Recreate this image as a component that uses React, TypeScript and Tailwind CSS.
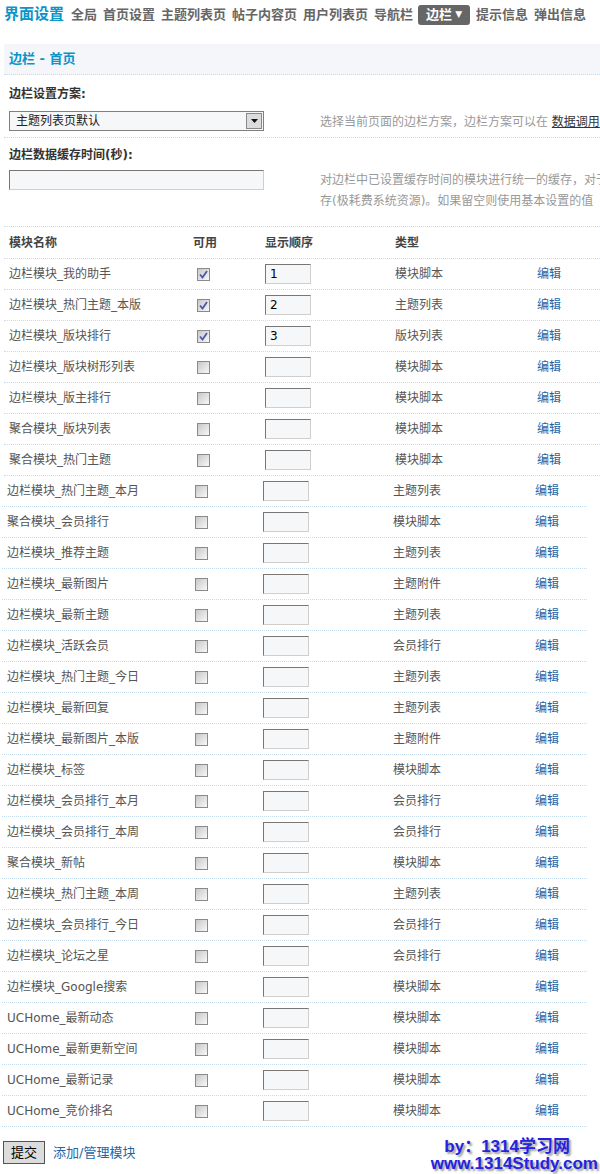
import React from 'react';

const font = "font-['DejaVu_Sans','Noto_Sans_CJK_SC',sans-serif]";

type Row = { name: string; on?: boolean; order?: string; type: string };

const mainRows: Row[] = [
  { name: '边栏模块_我的助手', on: true, order: '1', type: '模块脚本' },
  { name: '边栏模块_热门主题_本版', on: true, order: '2', type: '主题列表' },
  { name: '边栏模块_版块排行', on: true, order: '3', type: '版块列表' },
  { name: '边栏模块_版块树形列表', type: '模块脚本' },
  { name: '边栏模块_版主排行', type: '模块脚本' },
  { name: '聚合模块_版块列表', type: '模块脚本' },
  { name: '聚合模块_热门主题', type: '模块脚本' },
];

const moreRows: Row[] = [
  { name: '边栏模块_热门主题_本月', type: '主题列表' },
  { name: '聚合模块_会员排行', type: '模块脚本' },
  { name: '边栏模块_推荐主题', type: '主题列表' },
  { name: '边栏模块_最新图片', type: '主题附件' },
  { name: '边栏模块_最新主题', type: '主题列表' },
  { name: '边栏模块_活跃会员', type: '会员排行' },
  { name: '边栏模块_热门主题_今日', type: '主题列表' },
  { name: '边栏模块_最新回复', type: '主题列表' },
  { name: '边栏模块_最新图片_本版', type: '主题附件' },
  { name: '边栏模块_标签', type: '模块脚本' },
  { name: '边栏模块_会员排行_本月', type: '会员排行' },
  { name: '边栏模块_会员排行_本周', type: '会员排行' },
  { name: '聚合模块_新帖', type: '模块脚本' },
  { name: '边栏模块_热门主题_本周', type: '主题列表' },
  { name: '边栏模块_会员排行_今日', type: '会员排行' },
  { name: '边栏模块_论坛之星', type: '会员排行' },
  { name: '边栏模块_Google搜索', type: '模块脚本' },
  { name: 'UCHome_最新动态', type: '模块脚本' },
  { name: 'UCHome_最新更新空间', type: '模块脚本' },
  { name: 'UCHome_最新记录', type: '模块脚本' },
  { name: 'UCHome_竞价排名', type: '模块脚本' },
];

const navItems = ['全局', '首页设置', '主题列表页', '帖子内容页', '用户列表页', '导航栏'];

const Checkbox = ({ checked }: { checked?: boolean }) => (
  <span className="ml-[4px] flex h-[13px] w-[13px] items-center justify-center border border-[#8a8a8a] bg-gradient-to-br from-[#c8c8c8] to-[#f8f8f8]">
    {checked && (
      <svg width="9" height="9" viewBox="0 0 9 9">
        <path d="M1 4.5 L3.5 7.5 L8 1" fill="none" stroke="#4a5aa8" strokeWidth="1.8" />
      </svg>
    )}
  </span>
);

const OrderInput = ({ value }: { value?: string }) => (
  <div className="flex h-[20px] w-[46px] items-center border border-t-[#777] border-l-[#777] border-b-[#cfcfcf] border-r-[#cfcfcf] bg-[#f5f7f9] pl-[4px] text-[12px] text-black">
    {value}
  </div>
);

const TableRow = ({ row }: { row: Row }) => (
  <div className="grid h-[31px] grid-cols-[184px_72px_130px_142px_1fr] items-center border-b border-dotted border-[#c4dcef] pl-[5px] text-[12px] text-[#555]">
    <span>{row.name}</span>
    <span className="flex">
      <Checkbox checked={row.on} />
    </span>
    <span>
      <OrderInput value={row.order} />
    </span>
    <span>{row.type}</span>
    <span className="text-[#2366a8]">编辑</span>
  </div>
);

export default function App() {
  return (
    <div className={`relative w-[600px] overflow-hidden bg-white pb-[2px] ${font}`}>
      {/* nav */}
      <div className="flex h-[30px] items-center gap-[6px] pl-[4px] pb-[1px] text-[13px] font-bold text-[#666]">
        <span className="mr-[1px] text-[15px] text-[#0a94c8]">界面设置</span>
        {navItems.map((n) => (
          <span key={n}>{n}</span>
        ))}
        <span className="-ml-[1px] flex h-[20px] items-center gap-[3px] rounded-[3px] bg-[#666] px-[8px] text-white">
          边栏<span className="text-[9px]">▼</span>
        </span>
        <span>提示信息</span>
        <span>弹出信息</span>
      </div>

      <div className="ml-[4px] mt-[14px]">
        <div className="flex h-[31px] items-center border-b border-dotted border-[#c4dcef] bg-[#f4f6f9] pl-[5px] text-[13px] font-bold text-[#0a94c8]">
          边栏 - 首页
        </div>

        {/* scheme */}
        <div className="border-b border-dotted border-[#c4dcef] pl-[5px] pt-[12px] pb-[6px]">
          <div className="text-[12px] font-bold leading-[14px] text-[#333]">边栏设置方案:</div>
          <div className="mt-[10px] flex items-center">
            <div className="flex h-[20px] w-[255px] items-center justify-between border border-[#7f7f7f] bg-[#f5f7f9] pl-[6px] pr-[1px] text-[12px] text-[#222]">
              <span>主题列表页默认</span>
              <span className="flex h-[16px] w-[16px] items-center justify-center border border-[#888] bg-[#dcdcdc]">
                <svg width="7" height="4" viewBox="0 0 7 4">
                  <path d="M0 0 H7 L3.5 4 Z" fill="#111" />
                </svg>
              </span>
            </div>
            <div className="ml-[56px] whitespace-nowrap pt-[2px] text-[12px] text-[#999]">
              选择当前页面的边栏方案，边栏方案可以在 <span className="text-[#333] underline">数据调用</span>
            </div>
          </div>
        </div>

        {/* cache */}
        <div className="border-b border-dotted border-[#c4dcef] pl-[5px] pt-[10px] pb-[14px]">
          <div className="text-[12px] font-bold leading-[14px] text-[#333]">边栏数据缓存时间(秒):</div>
          <div className="mt-[8px] flex items-start">
            <div className="h-[20px] w-[255px] shrink-0 border border-t-[#777] border-l-[#777] border-b-[#cfcfcf] border-r-[#cfcfcf] bg-[#f5f7f9]" />
            <div className="ml-[56px] text-[12px] leading-[21px] text-[#999]">
              <div className="whitespace-nowrap">对边栏中已设置缓存时间的模块进行统一的缓存，对于需要实时更新的模块请不要设置缓</div>
              <div className="whitespace-nowrap">存(极耗费系统资源)。如果留空则使用基本设置的值</div>
            </div>
          </div>
        </div>

        {/* table */}
        <div className="grid h-[32px] grid-cols-[184px_72px_130px_142px_1fr] items-center border-b border-dotted border-[#c4dcef] pl-[5px] text-[12px] font-bold text-[#444]">
          <span>模块名称</span>
          <span>可用</span>
          <span>显示顺序</span>
          <span>类型</span>
          <span />
        </div>
        {mainRows.map((r) => (
          <TableRow key={r.name} row={r} />
        ))}
        <div className="-ml-[2px] w-[585px]">
          {moreRows.map((r) => (
            <TableRow key={r.name} row={r} />
          ))}
        </div>

        {/* footer */}
        <div className="mt-[14px] flex items-start justify-between">
          <div className="flex items-center">
            <button className="-ml-[1px] h-[23px] w-[42px] border border-[#555] bg-[#dcdcdc] text-[13px] text-black">
              提交
            </button>
            <span className="ml-[8px] text-[13px] text-[#2366a8]">添加/管理模块</span>
          </div>
          <div className="-mt-[3px] flex flex-col items-end font-['Liberation_Sans','Noto_Sans_CJK_SC',sans-serif] text-[17px] font-bold leading-[17px] text-[#2323e0] [text-shadow:2px_2px_2px_#9a9a9a]">
            <span className="mr-[30px]">by：1314学习网</span>
            <span className="mr-[2px]">www.1314Study.com</span>
          </div>
        </div>
      </div>
    </div>
  );
}
